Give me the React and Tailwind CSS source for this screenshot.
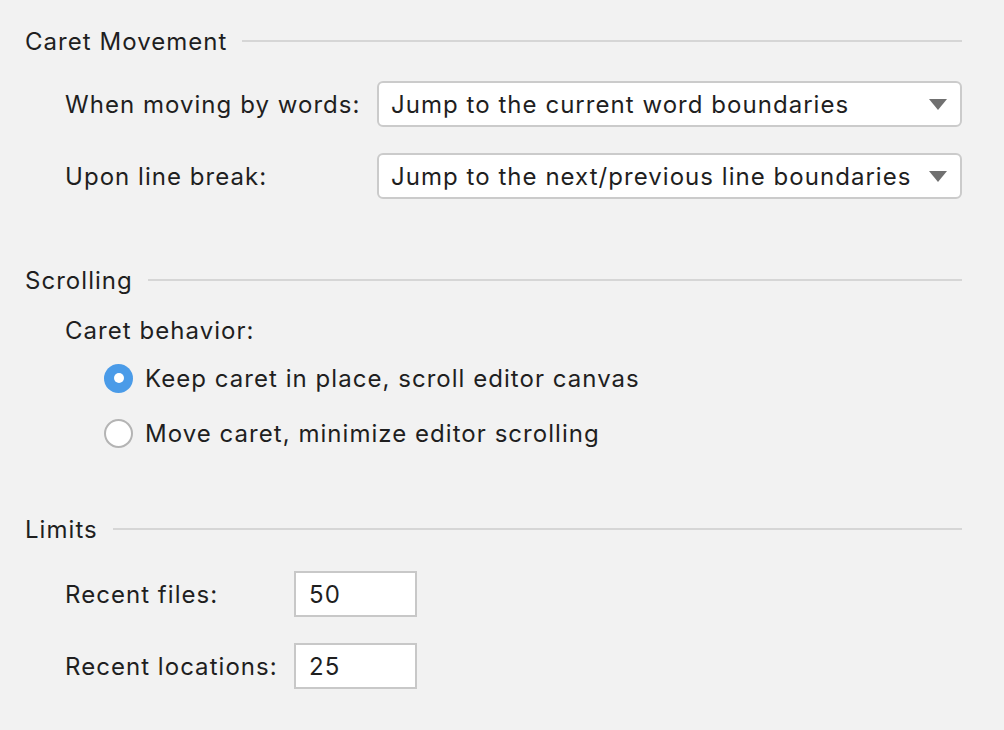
import React from 'react';

const font = { fontFamily: 'Inter, "Noto Sans", sans-serif' };

function SectionHeader({ title, className = '' }) {
  return (
    <div className={`flex items-center h-[30px] ${className}`}>
      <span className="text-[24px] leading-[30px] pt-[1px] text-[#1f1f1f]">{title}</span>
      <div className="flex-1 h-[2px] bg-[#d6d6d6] ml-[15px]" />
    </div>
  );
}

function Combo({ value }) {
  return (
    <div className="flex-1 h-[46px] bg-white border-2 border-[#cbcbcb] rounded-[6px] flex items-center pl-[12px] pr-[13px]">
      <span className="flex-1 text-[24px] pt-[2px] text-[#1f1f1f] whitespace-nowrap">{value}</span>
      <svg width="18" height="11" viewBox="0 0 18 11">
        <polygon points="0,0 18,0 9,11" fill="#707070" />
      </svg>
    </div>
  );
}

function Radio({ checked, label, className = '' }) {
  return (
    <div className={`flex items-center h-[30px] ${className}`}>
      {checked ? (
        <div className="w-[29px] h-[29px] rounded-full bg-[#4a9be8] flex items-center justify-center">
          <div className="w-[10px] h-[10px] rounded-full bg-white" />
        </div>
      ) : (
        <div className="w-[29px] h-[29px] rounded-full bg-white border-2 border-[#b4b4b4]" />
      )}
      <span className="ml-[12px] pt-[1px] text-[24px] text-[#1f1f1f]">{label}</span>
    </div>
  );
}

function NumberField({ label, value, className = '' }) {
  return (
    <div className={`flex items-center ${className}`}>
      <span className="w-[229px] pt-[2px] text-[24px] text-[#1f1f1f]">{label}</span>
      <div className="w-[123px] h-[46px] bg-white border-2 border-[#c8c8c8] flex items-center pl-[13px] pt-[2px] text-[24px] text-[#1f1f1f]">
        {value}
      </div>
    </div>
  );
}

export default function App() {
  return (
    <div className="w-[1004px] h-[730px] bg-[#f2f2f2] overflow-hidden tracking-[0.065em]" style={font}>
      <div className="pl-[25px] pr-[42px] pt-[26px]">
        <SectionHeader title="Caret Movement" />
        <div className="pl-[40px]">
          <div className="flex items-center mt-[25px]">
            <span className="w-[312px] pt-[2px] text-[24px] text-[#1f1f1f]">When moving by words:</span>
            <Combo value="Jump to the current word boundaries" />
          </div>
          <div className="flex items-center mt-[26px]">
            <span className="w-[312px] pt-[2px] text-[24px] text-[#1f1f1f]">Upon line break:</span>
            <Combo value="Jump to the next/previous line boundaries" />
          </div>
        </div>

        <SectionHeader title="Scrolling" className="mt-[66px]" />
        <div className="pl-[40px]">
          <div className="h-[30px] mt-[20px] pt-[1px] text-[24px] leading-[30px] text-[#1f1f1f]">Caret behavior:</div>
          <div className="pl-[39px]">
            <Radio checked label="Keep caret in place, scroll editor canvas" className="mt-[18px]" />
            <Radio label="Move caret, minimize editor scrolling" className="mt-[25px]" />
          </div>
        </div>

        <SectionHeader title="Limits" className="mt-[66px]" />
        <div className="pl-[40px]">
          <NumberField label="Recent files:" value="50" className="mt-[27px]" />
          <NumberField label="Recent locations:" value="25" className="mt-[26px]" />
        </div>
      </div>
    </div>
  );
}
